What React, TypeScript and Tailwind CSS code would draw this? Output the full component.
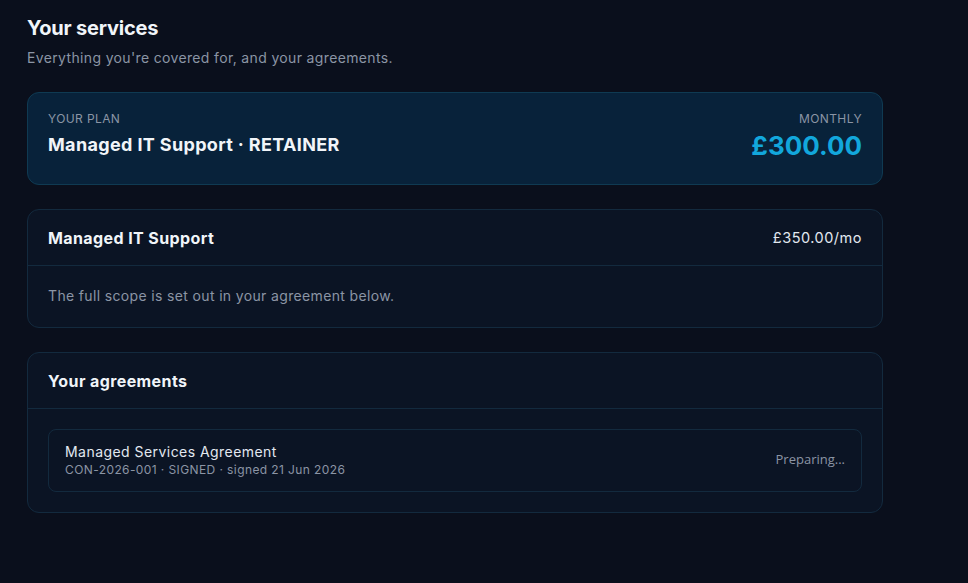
export default function App() {
  return (
    <div className="min-h-[583px] w-full bg-[#0a0f1c] font-['Inter','Noto_Sans',sans-serif] text-[#f1f5f9]">
      <div className="w-[856px] ml-[27px] pt-[14px]">
        <h1 className="text-xl leading-7 font-bold tracking-[-0.2px]">Your services</h1>
        <p className="mt-[6px] text-sm leading-5 tracking-[0.35px] text-[#8b95a5]">
          Everything you're covered for, and your agreements.
        </p>

        <div className="mt-[24px] flex flex-col gap-6">
          {/* plan summary */}
          <section className="rounded-xl border border-[#0f3a52] bg-[#08223a] px-5 pt-[18px] pb-5 flex items-start justify-between">
            <div>
              <div className="text-xs leading-4 uppercase tracking-[0.4px] text-[#8b95a5]">Your plan</div>
              <div className="mt-[6px] text-lg leading-6 font-bold tracking-[0.35px]">Managed IT Support · RETAINER</div>
            </div>
            <div className="text-right">
              <div className="text-xs leading-4 uppercase tracking-[0.4px] text-[#8b95a5]">Monthly</div>
              <div className="mt-px text-[26px] leading-9 font-bold text-[#12a7dc]">£300.00</div>
            </div>
          </section>

          {/* service */}
          <section className="rounded-xl border border-[#132a3e] bg-[#0b1424]">
            <div className="h-[56px] px-5 flex items-center justify-between border-b border-[#132a3e]">
              <h2 className="text-base leading-5 font-bold tracking-[0.4px]">Managed IT Support</h2>
              <span className="text-[14.5px] tracking-[0.5px] text-[#e2e8f0]">£350.00/mo</span>
            </div>
            <div className="px-5 pt-5 pb-[21px] text-sm leading-5 tracking-[0.35px] text-[#8b95a5]">
              The full scope is set out in your agreement below.
            </div>
          </section>

          {/* agreements */}
          <section className="rounded-xl border border-[#132a3e] bg-[#0b1424]">
            <div className="h-[56px] px-5 flex items-center border-b border-[#132a3e]">
              <h2 className="text-base leading-5 font-bold tracking-[0.4px]">Your agreements</h2>
            </div>
            <div className="p-5">
              <div className="rounded-lg border border-[#132a3e] px-4 pt-3 pb-[13px] flex items-center justify-between">
                <div>
                  <div className="text-sm leading-5 tracking-[0.45px] text-[#e2e8f0]">Managed Services Agreement</div>
                  <div className="text-xs leading-4 tracking-[0.4px] text-[#8b95a5]">CON-2026-001 · SIGNED · signed 21 Jun 2026</div>
                </div>
                <button className="text-[13px] font-['Open_Sans',sans-serif] text-[#8b95a5]">Preparing...</button>
              </div>
            </div>
          </section>
        </div>
      </div>
    </div>
  );
}
